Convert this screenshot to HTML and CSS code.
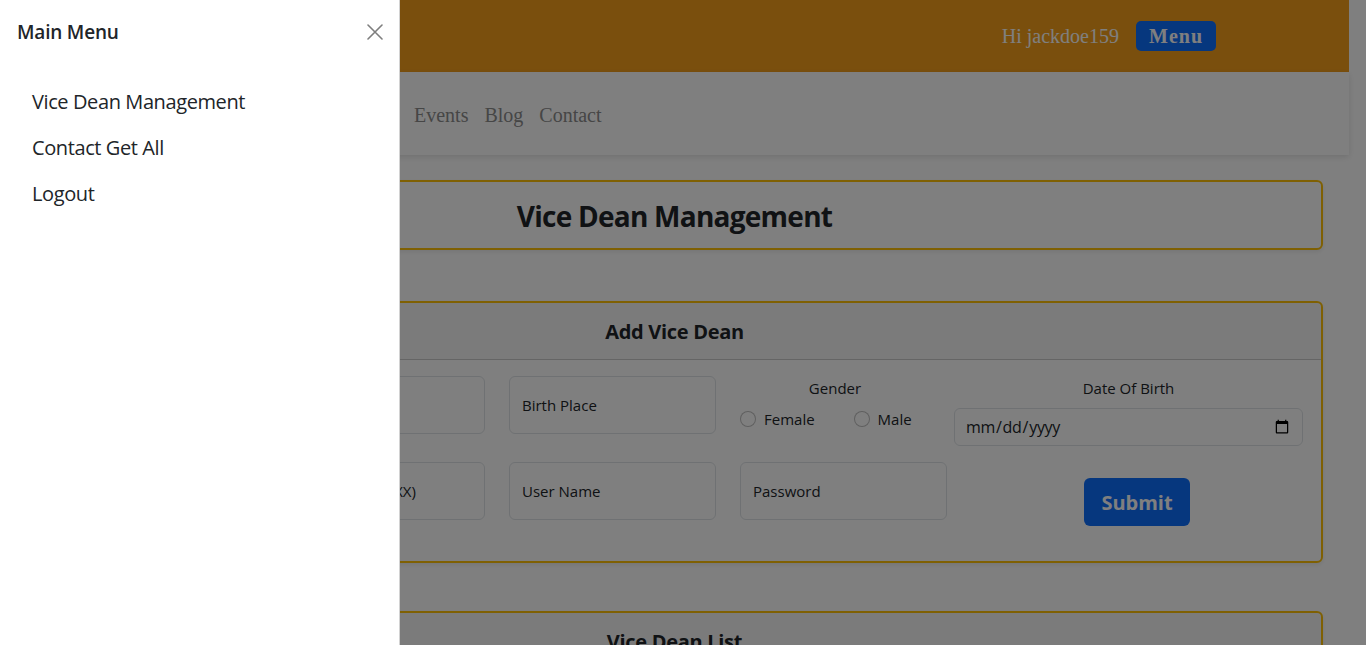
FILE: index.html
```html
<!DOCTYPE html>
<html lang="en">
<head>
<meta charset="utf-8">
<title>Vice Dean Management</title>
<link rel="stylesheet" href="styles.css">
</head>
<body>
<div class="page">
  <header class="topbar">
    <span class="greet">Hi jackdoe159</span>
    <button class="menu-btn" type="button">Menu</button>
  </header>
  <nav class="navbar">
    <ul class="nav-links">
      <li><a href="#">Events</a></li>
      <li><a href="#">Blog</a></li>
      <li><a href="#">Contact</a></li>
    </ul>
  </nav>
  <main class="container">
    <section class="card card-title">
      <h3 class="page-title">Vice Dean Management</h3>
    </section>

    <section class="card card-form">
      <div class="card-header"><h5>Add Vice Dean</h5></div>
      <form class="card-body">
        <div class="form-row row-one">
          <input class="field" type="text" placeholder="Name">
          <input class="field" type="text" placeholder="Surname">
          <input class="field" type="text" placeholder="Birth Place">
          <div class="group">
            <span class="group-label">Gender</span>
            <div class="radios">
              <label class="radio"><input type="radio" name="gender"><span>Female</span></label>
              <label class="radio"><input type="radio" name="gender"><span>Male</span></label>
            </div>
          </div>
          <div class="group">
            <span class="group-label">Date Of Birth</span>
            <input class="date" type="date">
          </div>
        </div>
        <div class="form-row row-two">
          <input class="field" type="text" placeholder="Phone Number">
          <input class="field" type="text" placeholder="Ssn (XXX-XX-XXXX)">
          <input class="field" type="text" placeholder="User Name">
          <input class="field" type="password" placeholder="Password">
          <div class="submit-cell"><button class="submit" type="button">Submit</button></div>
        </div>
      </form>
    </section>

    <section class="card card-list">
      <div class="card-header"><h5>Vice Dean List</h5></div>
      <div class="card-body list-body"></div>
    </section>
  </main>
</div>

<div class="backdrop"></div>

<aside class="offcanvas">
  <div class="offcanvas-header">
    <h5 class="offcanvas-title">Main Menu</h5>
    <button class="close-btn" type="button" aria-label="Close">
      <svg width="16" height="16" viewBox="0 0 16 16"><path d="M1 1L15 15M15 1L1 15" stroke="#000" stroke-width="1.6" stroke-linecap="round" fill="none"/></svg>
    </button>
  </div>
  <ul class="offcanvas-menu">
    <li><a href="#">Vice Dean Management</a></li>
    <li><a href="#">Contact Get All</a></li>
    <li><a href="#">Logout</a></li>
  </ul>
</aside>
</body>
</html>
```
FILE: styles.css
```css
* { box-sizing: border-box; }
html, body { margin: 0; height: 100%; }
body {
  background: #fff;
  overflow: hidden;
  padding-right: 17px;
  font-family: "Open Sans", "Noto Sans", sans-serif;
  color: #212529;
}
.page { width: 1349px; }

.topbar {
  height: 72px;
  background: #f59f1b;
  display: flex;
  align-items: center;
  justify-content: flex-end;
  gap: 17px;
  padding-right: 133px;
  font-family: "Liberation Serif", serif;
}
.greet { color: #fff; font-size: 20px; }
.menu-btn {
  font-family: "Liberation Serif", serif;
  font-weight: bold;
  font-size: 20px;
  letter-spacing: 1px;
  color: #fff;
  background: #0d6efd;
  border: 0;
  border-radius: 5px;
  height: 30px;
  width: 80px;
  padding: 0;
}

.navbar {
  height: 83px;
  background: #fff;
  display: flex;
  align-items: center;
  padding-top: 4px;
  box-shadow: 0 2px 6px rgba(0,0,0,.12);
  position: relative;
}
.nav-links {
  list-style: none;
  display: flex;
  margin: 0;
  padding: 0 0 0 406px;
  font-family: "Liberation Serif", serif;
  font-size: 20px;
}
.nav-links a {
  display: block;
  padding: 8px;
  color: #8c8c8c;
  text-decoration: none;
}

.container {
  max-width: 1320px;
  margin: 0 auto;
  padding: 25px 12px 0;
}
.card {
  border: 2px solid #ffc107;
  border-radius: 6px;
  background: #fff;
  box-shadow: 0 2px 4px rgba(0,0,0,.08);
  overflow: hidden;
}
.card-title { padding: 17px 16px 15px; text-align: center; }
.page-title { margin: 0; font-size: 28px; font-weight: 700; line-height: 34px; letter-spacing: -0.75px; }
.card-form { margin-top: 51px; }
.card-list { margin-top: 48px; }
.card-header {
  padding: 17px 16px 15px;
  text-align: center;
  background: rgba(0,0,0,.03);
  border-bottom: 1px solid rgba(0,0,0,.175);
}
.card-header h5 { margin: 0; font-size: 20px; font-weight: 700; line-height: 24px; letter-spacing: -0.3px; }

.card-body { padding: 16px 17.5px 35px 18.5px; display: flex; flex-direction: column; gap: 16px; }
.list-body { height: 80px; }
.form-row { display: grid; column-gap: 24px; align-items: start; }
.row-one { grid-template-columns: 207px 207px 207px 190px 1fr; }
.row-two { grid-template-columns: 207px 207px 207px 207px 1fr; }

.field {
  height: 58px;
  border: 1px solid #dee2e6;
  border-radius: 6px;
  padding: 0 12px;
  font-family: inherit;
  font-size: 15px;
  color: #212529;
  background: #fff;
  width: 100%;
}
.field::placeholder { color: #212529; opacity: 1; }

.group { display: flex; flex-direction: column; align-items: center; }
.group-label { font-size: 15px; line-height: 22px; margin-top: 1px; margin-bottom: 9px; }
.radios { display: flex; gap: 39px; align-self: stretch; height: 22px; align-items: center; }
.radio { display: flex; align-items: center; gap: 8px; font-size: 15px; }
.radio input {
  appearance: none;
  width: 16px; height: 16px;
  margin: 0;
  border: 1px solid rgba(0,0,0,.25);
  border-radius: 50%;
  background: #fff;
}
.date {
  width: 100%;
  height: 38px;
  border: 1px solid #dee2e6;
  border-radius: 6px;
  padding: 6px 10px;
  font-family: inherit;
  font-size: 16px;
  letter-spacing: -0.3px;
  color: #212529;
  background: #fff;
}

.submit-cell { display: flex; justify-content: center; padding-top: 16px; }
.submit {
  height: 48px;
  padding: 0 17px;
  font-family: inherit;
  font-size: 20px;
  font-weight: 700;
  color: #fff;
  background: #0d6efd;
  border: 0;
  border-radius: 6px;
}

.backdrop {
  position: fixed;
  inset: 0;
  background: rgba(0,0,0,.5);
  z-index: 10;
}
.offcanvas {
  position: fixed;
  top: 0; left: 0; bottom: 0;
  width: 400px;
  background: #fff;
  border-right: 1px solid rgba(0,0,0,.175);
  z-index: 20;
  display: flex;
  flex-direction: column;
}
.offcanvas-header {
  display: flex;
  align-items: center;
  justify-content: space-between;
  padding: 16px;
  height: 63px;
}
.offcanvas-title { margin: 0; font-size: 19px; font-weight: 600; line-height: 1.2; padding: 2px 0 0 1px; letter-spacing: -0.2px; }
.close-btn {
  width: 16px; height: 16px;
  padding: 0; border: 0; background: none;
  opacity: .5;
  display: flex;
}
.offcanvas-menu { list-style: none; margin: 0; padding: 16px; }
.offcanvas-menu a {
  display: block;
  padding: 8px 16px;
  font-size: 20px;
  line-height: 30px;
  letter-spacing: -0.4px;
  color: #212529;
  text-decoration: none;
}
```
